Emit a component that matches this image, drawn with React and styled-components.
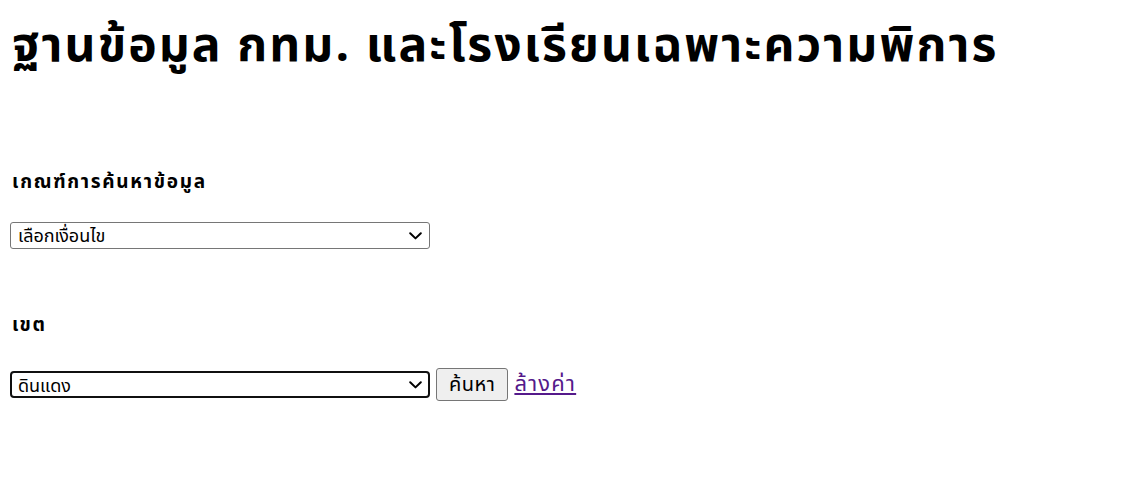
import React from "react";
import styled, { createGlobalStyle } from "styled-components";

const GlobalStyle = createGlobalStyle`
  body {
    margin: 0;
    padding: 10px;
    background: #fff;
    color: #000;
    font-family: Tahoma, "Noto Sans Thai", "Noto Sans", "DejaVu Sans", sans-serif;
  }
`;

const Title = styled.h1`
  font-size: 48px;
  font-weight: 700;
  letter-spacing: 2.1px;
  margin: 8px 0 0 2px;
  line-height: 1.2;
`;

const Field = styled.div`
  margin-top: ${(p) => p.$top}px;
`;

const Label = styled.h4`
  font-size: 19px;
  font-weight: 700;
  letter-spacing: 1.7px;
  margin: 0 0 ${(p) => p.$gap}px 2px;
  line-height: 1.2;
`;

const Row = styled.div`
  display: flex;
  align-items: center;
  gap: 6px;
`;

const SelectWrap = styled.div`
  position: relative;
  width: 420px;
  height: 27px;
`;

const Select = styled.select`
  appearance: none;
  width: 100%;
  height: 100%;
  font-family: inherit;
  font-size: 18px;
  border: ${(p) => (p.$focus ? "2px solid #101010" : "1px solid #767676")};
  border-radius: ${(p) => (p.$focus ? "4px" : "3px")};
  background: #fff;
  color: #000;
  padding: 0 24px 0 ${(p) => (p.$focus ? "6px" : "7px")};
  margin: 0;
  outline: none;
`;

const Chevron = styled.svg`
  position: absolute;
  right: 8px;
  top: 50%;
  transform: translateY(-50%);
  width: 13px;
  height: 8px;
  pointer-events: none;
`;

const Button = styled.button`
  height: 33px;
  padding: 0 12px;
  font-family: inherit;
  font-size: 20px;
  letter-spacing: 0.5px;
  border: 1px solid #767676;
  border-radius: 3px;
  background: #efefef;
  color: #000;
`;

const ClearLink = styled.a`
  font-size: 22px;
  letter-spacing: 1.2px;
  color: #551a8b;
  text-decoration: underline;
`;

function Dropdown({ focus, value, children }) {
  return (
    <SelectWrap>
      <Select $focus={focus} defaultValue={value}>
        {children}
      </Select>
      <Chevron viewBox="0 0 13 8">
        <path d="M1.2 1.2 L6.5 6.4 L11.8 1.2" fill="none" stroke="#000" strokeWidth="2" strokeLinecap="round" strokeLinejoin="round" />
      </Chevron>
    </SelectWrap>
  );
}

export default function App() {
  return (
    <>
      <GlobalStyle />
      <Title>ฐานข้อมูล กทม. และโรงเรียนเฉพาะความพิการ</Title>
      <form onSubmit={(e) => e.preventDefault()}>
        <Field $top={96}>
          <Label $gap={28}>เกณฑ์การค้นหาข้อมูล</Label>
          <Dropdown value="0">
            <option value="0">เลือกเงื่อนไข</option>
            <option value="1">เขต</option>
          </Dropdown>
        </Field>
        <Field $top={66}>
          <Label $gap={30}>เขต</Label>
          <Row>
            <Dropdown focus value="dindaeng">
              <option value="dindaeng">ดินแดง</option>
            </Dropdown>
            <Button type="submit">ค้นหา</Button>
            <ClearLink href="#">ล้างค่า</ClearLink>
          </Row>
        </Field>
      </form>
    </>
  );
}
